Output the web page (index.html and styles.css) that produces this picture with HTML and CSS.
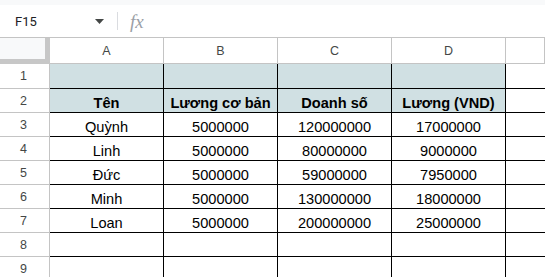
FILE: index.html
```html
<!DOCTYPE html>
<html lang="vi">
<head>
  <meta charset="UTF-8">
  <title>Sheet</title>
  <link rel="stylesheet" href="styles.css">
</head>
<body>

  <div class="top-strip"></div>

  <div class="formula-bar">
    <div class="name-box">F15</div>
    <svg class="caret" width="9" height="5" viewBox="0 0 9 5"><path d="M0 0h9L4.5 5z" fill="#444746"/></svg>
    <div class="divider"></div>
    <span class="fx">fx</span>
  </div>

  <div class="sheet">
    <div class="corner"></div>
    <div class="col-head">A</div>
    <div class="col-head">B</div>
    <div class="col-head">C</div>
    <div class="col-head">D</div>
    <div class="col-head"></div>

    <div class="row-head">1</div>
    <div class="cell fill"></div>
    <div class="cell fill"></div>
    <div class="cell fill"></div>
    <div class="cell fill"></div>
    <div class="cell last"></div>

    <div class="row-head">2</div>
    <div class="cell fill bold">Tên</div>
    <div class="cell fill bold">Lương cơ bản</div>
    <div class="cell fill bold">Doanh số</div>
    <div class="cell fill bold">Lương (VND)</div>
    <div class="cell last"></div>

    <div class="row-head">3</div>
    <div class="cell">Quỳnh</div>
    <div class="cell">5000000</div>
    <div class="cell">120000000</div>
    <div class="cell">17000000</div>
    <div class="cell last"></div>

    <div class="row-head">4</div>
    <div class="cell">Linh</div>
    <div class="cell">5000000</div>
    <div class="cell">80000000</div>
    <div class="cell">9000000</div>
    <div class="cell last"></div>

    <div class="row-head">5</div>
    <div class="cell">Đức</div>
    <div class="cell">5000000</div>
    <div class="cell">59000000</div>
    <div class="cell">7950000</div>
    <div class="cell last"></div>

    <div class="row-head">6</div>
    <div class="cell">Minh</div>
    <div class="cell">5000000</div>
    <div class="cell">130000000</div>
    <div class="cell">18000000</div>
    <div class="cell last"></div>

    <div class="row-head">7</div>
    <div class="cell">Loan</div>
    <div class="cell">5000000</div>
    <div class="cell">200000000</div>
    <div class="cell">25000000</div>
    <div class="cell last"></div>

    <div class="row-head">8</div>
    <div class="cell"></div>
    <div class="cell"></div>
    <div class="cell"></div>
    <div class="cell"></div>
    <div class="cell last"></div>

    <div class="row-head">9</div>
    <div class="cell"></div>
    <div class="cell"></div>
    <div class="cell"></div>
    <div class="cell"></div>
    <div class="cell last"></div>
  </div>

</body>
</html>
```

FILE: styles.css
```css
    body {
      margin: 0;
      padding: 0;
      width: 545px;
      height: 277px;
      overflow: hidden;
      background-color: #fff;
      font-family: "Liberation Sans", Arial, sans-serif;
      color: #000;
    }

    .top-strip {
      height: 5px;
      background-color: #f8f9fa;
    }

    .formula-bar {
      display: flex;
      align-items: center;
      height: 32px;
      border-bottom: 1px solid #c4c4c4;
    }

    .name-box {
      width: 80px;
      padding-left: 15px;
      font-family: Roboto, "Liberation Sans", sans-serif;
      font-size: 13px;
      color: #202124;
    }

    .caret {
      display: block;
      margin-top: 1px;
    }

    .divider {
      width: 1px;
      height: 18px;
      margin-left: 13px;
      background-color: #dadce0;
    }

    .fx {
      margin-left: 12px;
      margin-top: 1px;
      font-family: "Liberation Serif", serif;
      font-style: italic;
      font-size: 19px;
      color: #9aa0a6;
    }

    .sheet {
      display: grid;
      grid-template-columns: 50px 114px 114px 114px 114px 1fr;
      grid-template-rows: 26px 25px repeat(8, 24px);
    }

    .sheet > div {
      box-sizing: border-box;
      display: flex;
      justify-content: center;
    }

    .corner {
      background-color: #f8f9fa;
      border-right: 5px solid #c7c7c7;
      border-bottom: 5px solid #c7c7c7;
    }

    .col-head {
      align-items: center;
      padding-top: 1px;
      border-right: 1px solid #c4c4c4;
      border-bottom: 1px solid #c4c4c4;
      font-size: 12.5px;
      color: #444746;
    }

    .row-head {
      align-items: center;
      padding-right: 2px;
      border-right: 1px solid #c4c4c4;
      border-bottom: 1px solid #c4c4c4;
      font-size: 12.5px;
      color: #444746;
    }

    .cell {
      align-items: flex-end;
      padding-bottom: 1px;
      border-right: 1px solid #000;
      border-bottom: 1px solid #000;
      font-size: 14.6px;
      white-space: nowrap;
    }

    .cell.last {
      border-right: none;
    }

    .fill {
      background-color: #d0e0e3;
    }

    .bold {
      font-weight: bold;
    }
```
